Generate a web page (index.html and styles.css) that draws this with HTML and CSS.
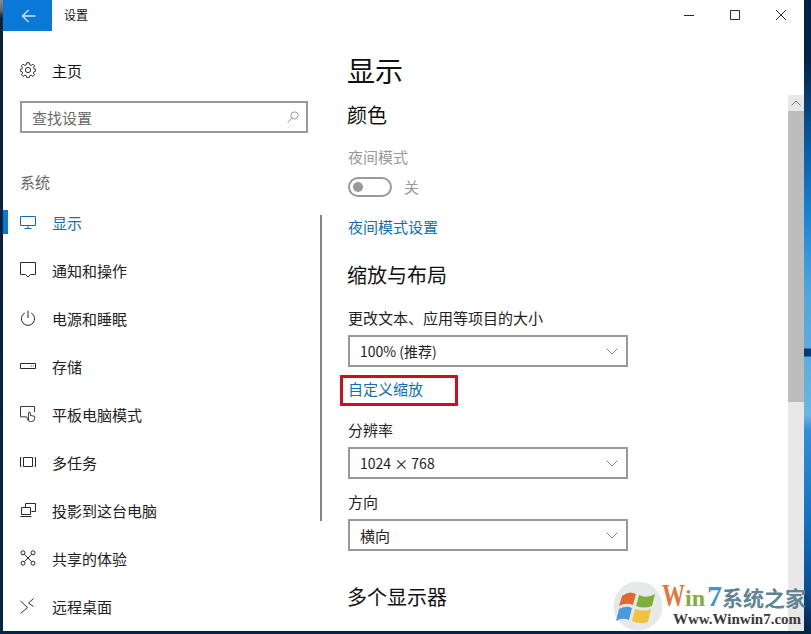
FILE: index.html
```html
<!DOCTYPE html>
<html lang="zh-CN">
<head>
<meta charset="utf-8">
<title>设置</title>
<link rel="stylesheet" href="styles.css">
</head>
<body>
<div class="desk">
  <div class="edge-left"></div>
  <div class="window">
    <header class="titlebar">
      <div class="back"><svg width="16" height="16" viewBox="0 0 16 16" class="ln-white"><path d="M1.5 8H14.5M7.5 2L1.5 8L7.5 14"/></svg></div>
      <div class="title">设置</div>
      <div class="caps">
        <svg width="46" height="30" viewBox="0 0 46 30" class="ln"><path d="M18 15.5H28"/></svg>
        <svg width="46" height="30" viewBox="0 0 46 30" class="ln"><path d="M18.5 10.5H27.5V19.5H18.5Z"/></svg>
        <svg width="46" height="30" viewBox="0 0 46 30" class="ln"><path d="M18 10L28 20M28 10L18 20"/></svg>
      </div>
    </header>
    <div class="body">
      <nav class="side">
        <div class="home">
          <svg width="16" height="16" viewBox="0 0 16 16" class="ln"><circle cx="8" cy="8" r="2.6"/><path d="M6.8.7H9.2L9.6 2.7 11.2 3.4 12.9 2.2 14.6 3.9 13.4 5.6 14.1 7 16 7.4V9L14.1 9.6 13.4 11 14.6 12.7 12.9 14.4 11.2 13.2 9.6 13.9 9.2 15.7H6.8L6.4 13.9 4.8 13.2 3.1 14.4 1.4 12.7 2.6 11 1.9 9.6 0 9V7.4L1.9 7 2.6 5.6 1.4 3.9 3.1 2.2 4.8 3.4 6.4 2.7Z"/></svg>
          <span>主页</span>
        </div>
        <div class="search">
          <span>查找设置</span>
          <svg width="12" height="12" viewBox="0 0 14 14" class="ln-grey"><circle cx="8.8" cy="5.2" r="4.2"/><path d="M5.8 8.2L.8 13.2"/></svg>
        </div>
        <div class="group">系统</div>
        <div class="item active">
          <svg width="16" height="16" viewBox="0 0 16 16" class="ln-blue"><path d="M.5 2.5H15.5V11.5H.5ZM8 11.5V14M4.5 14.5H11.5"/></svg>
          <span>显示</span>
        </div>
        <div class="item">
          <svg width="16" height="16" viewBox="0 0 16 16" class="ln"><path d="M.5 .5H15.5V12.5H10.5L8 15 5.5 12.5H.5Z"/></svg>
          <span>通知和操作</span>
        </div>
        <div class="item">
          <svg width="16" height="16" viewBox="0 0 16 16" class="ln"><path d="M8 .5V8M4.8 3A6.6 6.6 0 1 0 11.2 3"/></svg>
          <span>电源和睡眠</span>
        </div>
        <div class="item">
          <svg width="16" height="16" viewBox="0 0 16 16" class="ln"><path d="M.5 5.5H15.5V10.5H.5ZM11 8H11.8M13 8H13.8"/></svg>
          <span>存储</span>
        </div>
        <div class="item">
          <svg width="16" height="16" viewBox="0 0 17 17" class="ln"><path d="M7 11.5H.5V.5H15.5V6.5M9 15V7.5A1 1 0 0 1 11 7.5V10L15.5 11V13.5A3 3 0 0 1 12.5 16.5H11A3 3 0 0 1 8 14L7 11.5"/></svg>
          <span>平板电脑模式</span>
        </div>
        <div class="item">
          <svg width="16" height="16" viewBox="0 0 16 16" class="ln"><path d="M3.5 3.5H12.5V12.5H3.5ZM1.5 3.5H.5V12.5H1.5M14.5 3.5H15.5V12.5H14.5"/></svg>
          <span>多任务</span>
        </div>
        <div class="item">
          <svg width="16" height="16" viewBox="0 0 16 16" class="ln"><path d="M5.5 5V1.5H15.5V9.5H11.5M1.5 5.5H10.5V12.5H1.5ZM.5 14.5H11.5"/></svg>
          <span>投影到这台电脑</span>
        </div>
        <div class="item">
          <svg width="16" height="16" viewBox="0 0 16 16" class="ln"><circle cx="3" cy="2.8" r="2"/><circle cx="13" cy="2.8" r="2"/><circle cx="3" cy="13.2" r="2"/><circle cx="13" cy="13.2" r="2"/><path d="M4.5 4.3L11.5 11.7M11.5 4.3L4.5 11.7"/></svg>
          <span>共享的体验</span>
        </div>
        <div class="item">
          <svg width="16" height="16" viewBox="0 0 16 16" class="ln"><path d="M.5 3L7.5 9.5 .5 15.5M13.5 .5L8.5 5M8.5 5L13.5 8.5"/></svg>
          <span>远程桌面</span>
        </div>
      </nav>
      <div class="divider"></div>
      <main class="content">
        <h1>显示</h1>
        <h2 class="colour">颜色</h2>
        <div class="label disabled">夜间模式</div>
        <div class="toggle-row">
          <div class="toggle"><i></i></div>
          <span>关</span>
        </div>
        <a class="link night">夜间模式设置</a>
        <h2 class="scale">缩放与布局</h2>
        <div class="label first">更改文本、应用等项目的大小</div>
        <div class="select"><span>100% (推荐)</span><svg width="12" height="7" viewBox="0 0 12 7" class="ln-grey"><path d="M.5 .5L6 6 11.5 .5"/></svg></div>
        <div class="custom"><a class="link">自定义缩放</a><div class="redbox"></div></div>
        <div class="label">分辨率</div>
        <div class="select"><span>1024 × 768</span><svg width="12" height="7" viewBox="0 0 12 7" class="ln-grey"><path d="M.5 .5L6 6 11.5 .5"/></svg></div>
        <div class="label orient">方向</div>
        <div class="select wide"><span>横向</span><svg width="12" height="7" viewBox="0 0 12 7" class="ln-grey"><path d="M.5 .5L6 6 11.5 .5"/></svg></div>
        <h2 class="multi">多个显示器</h2>
      </main>
      <div class="scrollbar">
        <div class="sb-up"><svg width="10" height="6" viewBox="0 0 10 6" class="ln-dim"><path d="M.5 5.5L5 1 9.5 5.5"/></svg></div>
        <div class="sb-thumb"></div>
      </div>
    </div>
  </div>
  <div class="edge-right"></div>
</div>
<div class="mark">
  <svg class="orb" width="50" height="50" viewBox="0 0 50 50">
    <circle cx="25" cy="25" r="24.5" fill="#e6e9ea"/>
    <path d="M9 15Q16 9 23 13L20 24Q13 21 6 25Z" fill="#dd6a35"/>
    <path d="M26 14Q33 18 42 13L39 25Q31 28 23 25Z" fill="#7fae3c"/>
    <path d="M6 28Q13 24 19 27L16 39Q9 36 3 40Z" fill="#4b9ade"/>
    <path d="M22 28Q30 31 38 28L35 41Q27 44 19 40Z" fill="#f3c23f"/>
  </svg>
  <div class="mark-text">
    <div class="mark-top"><b class="w">W</b><b class="in">in</b><b class="seven">7</b><b class="cn">系统之家</b></div>
    <div class="mark-url">Www.Winwin7.com</div>
  </div>
</div>
</body>
</html>
```

FILE: styles.css
```css
* { box-sizing: border-box; }
html, body { margin: 0; padding: 0; }
body {
  width: 811px;
  height: 634px;
  overflow: hidden;
  position: relative;
  background: #04254a;
  font-family: "Noto Sans CJK SC", "Liberation Sans", sans-serif;
  color: #1a1a1a;
}
svg { display: block; fill: none; flex: none; }
.ln path, .ln circle { stroke: #2b2b2b; stroke-width: 1; }
.ln-white path { stroke: #d5e9fa; stroke-width: 1.3; }
.ln-blue path { stroke: #0f6fb5; stroke-width: 1; }
.ln-grey path, .ln-grey circle { stroke: #8a8a8a; stroke-width: 1; }
.ln-dim path { stroke: #777; stroke-width: 1; }

.desk { display: flex; height: 631px; }
.edge-left {
  width: 3px;
  background: linear-gradient(#8a8a8a 0, #666 10px, #0a2036 18px, #04254a 100%);
}
.edge-right {
  width: 7px;
  background: linear-gradient(#03204a 0, #03244b 60px, #0a5ea8 150px, #1a86d8 220px, #4fa6de 290px, #5aaee0 348px, #0a3a70 349px, #0a3a70 356px, #5aaee0 357px, #6ab6e4 415px, #2f8fd6 430px, #1273c4 520px, #0b4e92 590px, #04254a 631px);
}
.window { flex: 1; min-width: 0; background: #fff; display: flex; flex-direction: column; }

.titlebar { height: 31px; display: flex; align-items: stretch; flex: none; }
.back {
  width: 49px;
  background: #0a78d7;
  display: flex;
  align-items: center;
  justify-content: center;
  padding-left: 2px;
}
.title { font-size: 12px; line-height: 30px; margin-left: 12px; color: #111; }
.caps { margin-left: auto; display: flex; align-items: flex-start; }

.body { flex: 1; display: flex; min-height: 0; position: relative; }
.side { width: 317px; flex: none; overflow: hidden; }
.home {
  display: flex;
  align-items: center;
  height: 20px;
  margin-top: 29px;
  padding-left: 17px;
  gap: 16px;
  font-size: 15px;
  color: #111;
}
.search {
  margin: 21px 0 0 17px;
  width: 288px;
  height: 32px;
  border: 2px solid #999;
  display: flex;
  align-items: center;
  justify-content: space-between;
  padding: 0 7px 0 10px;
  font-size: 15px;
  color: #6a6a6a;
}
.group { margin: 39px 0 0 17px; font-size: 15px; line-height: 20px; color: #666; }
.item {
  display: flex;
  align-items: center;
  height: 48px;
  padding-left: 17px;
  gap: 16px;
  font-size: 15px;
  color: #222;
  position: relative;
}
.group + .item { margin-top: 6px; }
.item.active { color: #0f6fb5; }
.item.active::before {
  content: "";
  position: absolute;
  left: 0;
  top: 12px;
  width: 5px;
  height: 24px;
  background: #0a78d7;
}
.divider { width: 2px; height: 306px; margin-top: 184px; background: #828282; flex: none; }

.content { width: 466px; flex: none; padding-left: 26px; overflow: hidden; }
h1, h2 { margin: 0; font-weight: 400; color: #111; }
h1 { font-size: 28px; line-height: 40px; margin-top: 19px; margin-left: -1px; }
h2 { font-size: 20px; line-height: 28px; margin-left: -1px; }
.colour { margin-top: 11px; }
.label { height: 20px; padding-top: 1px; font-size: 15px; line-height: 20px; color: #222; margin-top: 13px; }
.label.disabled { color: #999; margin-top: 17px; }
.label.first { margin-top: 18px; }
.label.orient { margin-top: 12px; }
.toggle-row { display: flex; align-items: center; gap: 12px; margin-top: 10px; height: 22px; font-size: 15px; color: #999; }
.toggle-row span { padding-bottom: 2px; }
.toggle { width: 44px; height: 20px; border: 2px solid #999; border-radius: 10px; padding-left: 3px; display: flex; align-items: center; }
.toggle i { width: 10px; height: 10px; border-radius: 50%; background: #999; display: block; }
.link { display: block; color: #0f6fb5; font-size: 15px; line-height: 20px; }
.night { height: 20px; padding-top: 1px; margin-top: 18px; }
.scale { margin-top: 25px; }
.select {
  margin-top: 8px;
  width: 280px;
  height: 32px;
  border: 2px solid #999;
  display: flex;
  align-items: center;
  justify-content: space-between;
  padding: 0 8px 0 10px;
  font-size: 14px;
  color: #222;
}
.select.wide { font-size: 15px; }
.custom { position: relative; margin-top: 8px; height: 28px; display: flex; align-items: center; }
.redbox { position: absolute; left: -8px; top: 0; width: 118px; height: 31px; border: 3px solid #cc0f1e; border-radius: 1px; }
.custom + .label { margin-top: 16px; }
.multi { margin-top: 32px; }

.scrollbar { width: 16px; flex: none; margin-top: 64px; background: #e8e8e8; }
.sb-up { height: 16px; display: flex; align-items: center; justify-content: center; background: #e8e8e8; }
.sb-thumb { height: 291px; background: #bcbcbc; }

.mark { position: absolute; left: 613px; top: 581px; width: 198px; height: 50px; display: flex; }
.orb { margin-right: -1px; }
.mark-text { display: flex; flex-direction: column; }
.mark-top { display: flex; align-items: baseline; height: 26px; margin-top: 4px; white-space: nowrap; }
.mark-top b { font-weight: 700; line-height: 22px; }
.w { font-family: "Liberation Serif", serif; font-size: 23px; color: #de7840; transform: scaleY(1.35); transform-origin: 50% 78%; }
.in { font-family: "Liberation Serif", serif; font-size: 24px; color: #7fae3c; }
.seven { font-family: "Liberation Serif", serif; font-size: 30px; color: #3f97d8; margin-left: 2px; }
.cn { font-family: "Noto Sans CJK SC", sans-serif; font-size: 21px; color: #5f8496; }
.mark-url { font-family: "Liberation Serif", serif; font-weight: 700; font-size: 15px; line-height: 16px; color: #3a3a3a; margin-left: 11px; white-space: nowrap; }
```
